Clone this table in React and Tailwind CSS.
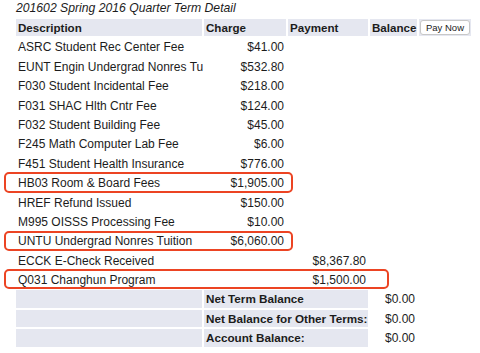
import React from "react";

const rows = [
  ["ASRC Student Rec Center Fee", "$41.00", ""],
  ["EUNT Engin Undergrad Nonres Tu", "$532.80", ""],
  ["F030 Student Incidental Fee", "$218.00", ""],
  ["F031 SHAC Hlth Cntr Fee", "$124.00", ""],
  ["F032 Student Building Fee", "$45.00", ""],
  ["F245 Math Computer Lab Fee", "$6.00", ""],
  ["F451 Student Health Insurance", "$776.00", ""],
  ["HB03 Room & Board Fees", "$1,905.00", ""],
  ["HREF Refund Issued", "$150.00", ""],
  ["M995 OISSS Processing Fee", "$10.00", ""],
  ["UNTU Undergrad Nonres Tuition", "$6,060.00", ""],
  ["ECCK E-Check Received", "", "$8,367.80"],
  ["Q031 Changhun Program", "", "$1,500.00"],
];

const summary = ["Net Term Balance", "Net Balance for Other Terms:", "Account Balance:"];

export default function App() {
  return (
    <div
      className="relative w-[480px] h-[353px] bg-white text-[#1c1c1c] overflow-hidden"
      style={{ fontFamily: '"Liberation Sans", Arial, sans-serif' }}
    >
      <div className="pl-[16px] h-[19px] text-[12.2px] italic leading-[15px] pt-[1px]">
        201602 Spring 2016 Quarter Term Detail
      </div>
      <div className="ml-[16px] grid grid-cols-[186px_82px_80px_47px_52px] auto-rows-[17.4px] gap-x-[2px] gap-y-[2px] text-[12px] leading-[18px]">
        <div className="bg-[#e5e7f0] font-bold text-[11.6px] px-[2px]">Description</div>
        <div className="bg-[#e5e7f0] font-bold text-[11.6px] px-[2px]">Charge</div>
        <div className="bg-[#e5e7f0] font-bold text-[11.6px] px-[2px]">Payment</div>
        <div className="bg-[#e5e7f0] font-bold text-[11.6px] px-[2px]">Balance</div>
        <div className="bg-[#e5e7f0] flex items-center pl-[1px]">
          <button className="h-[15px] w-[50px] bg-white border border-[#c8c8c8] rounded-[3px] text-[9.5px] leading-[13px] text-[#222]">
            Pay Now
          </button>
        </div>
        {rows.map(([d, c, p], i) => (
          <React.Fragment key={i}>
            <div className="px-[2px] whitespace-nowrap">{d}</div>
            <div className="px-[2px] text-right">{c}</div>
            <div className="px-[2px] text-right">{p}</div>
            <div></div>
            <div></div>
          </React.Fragment>
        ))}
        {summary.map((s, i) => (
          <React.Fragment key={i}>
            <div className="bg-[#e5e7f0]"></div>
            <div className="col-span-2 bg-[#e5e7f0] font-bold text-[11.7px] px-[2px] whitespace-nowrap">{s}</div>
            <div className="px-[2px] text-right">$0.00</div>
            <div></div>
          </React.Fragment>
        ))}
      </div>
      <div className="absolute left-[4px] top-[172px] w-[289px] h-[21px] border-2 border-[#ec4423] rounded-[5px]"></div>
      <div className="absolute left-[4px] top-[231px] w-[289px] h-[20px] border-2 border-[#ec4423] rounded-[5px]"></div>
      <div className="absolute left-[4px] top-[269px] w-[385px] h-[20px] border-2 border-[#ec4423] rounded-[5px]"></div>
    </div>
  );
}
